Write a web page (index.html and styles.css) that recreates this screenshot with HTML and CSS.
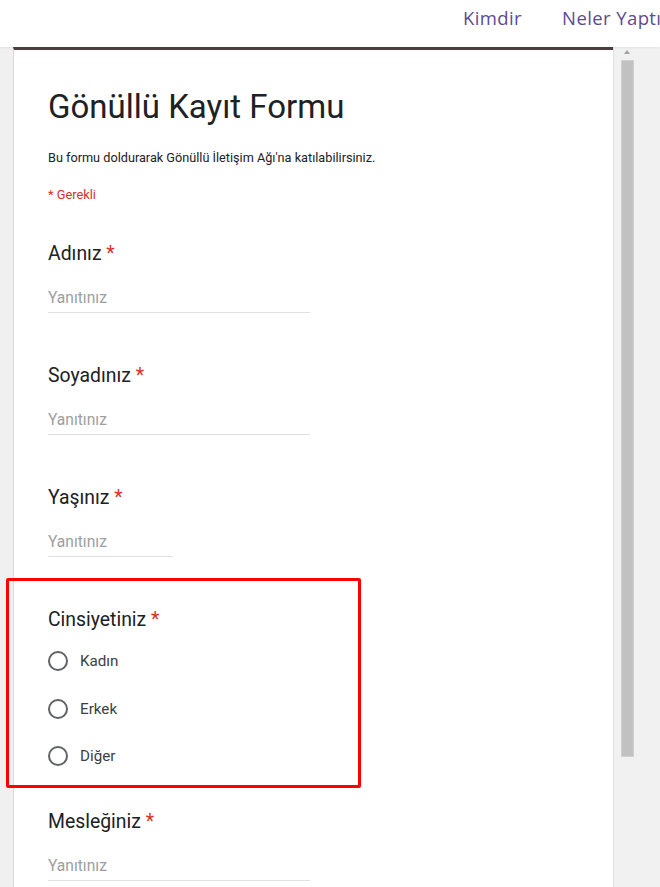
FILE: index.html
```
<!DOCTYPE html>
<html lang="tr">
<head>
<meta charset="utf-8">
<title>Gönüllü Kayıt Formu</title>
<link rel="stylesheet" href="styles.css">
</head>
<body>
<header class="topbar">
  <div class="brand"></div>
  <nav class="nav">
    <a class="nav-link" href="#">Kimdir</a>
    <a class="nav-link" href="#">Neler Yaptıklarımız</a>
  </nav>
</header>
<div class="frame">
  <div class="gutter"></div>
  <main class="card">
    <h1 class="form-title">Gönüllü Kayıt Formu</h1>
    <p class="form-desc">Bu formu doldurarak Gönüllü İletişim Ağı'na katılabilirsiniz.</p>
    <p class="required-note">* Gerekli</p>

    <section class="question">
      <div class="q-title">Adınız <span class="star">*</span></div>
      <div class="answer">Yanıtınız</div>
    </section>

    <section class="question">
      <div class="q-title">Soyadınız <span class="star">*</span></div>
      <div class="answer">Yanıtınız</div>
    </section>

    <section class="question">
      <div class="q-title">Yaşınız <span class="star">*</span></div>
      <div class="answer answer-short">Yanıtınız</div>
    </section>

    <section class="question">
      <div class="q-title">Cinsiyetiniz <span class="star">*</span></div>
      <div class="options">
        <div class="option"><span class="radio"></span><span class="opt-label">Kadın</span></div>
        <div class="option"><span class="radio"></span><span class="opt-label">Erkek</span></div>
        <div class="option"><span class="radio"></span><span class="opt-label">Diğer</span></div>
      </div>
    </section>

    <section class="question question-last">
      <div class="q-title">Mesleğiniz <span class="star">*</span></div>
      <div class="answer">Yanıtınız</div>
    </section>
  </main>
  <div class="scrollbar">
    <div class="scroll-arrow"></div>
    <div class="scroll-thumb"></div>
  </div>
</div>
<div class="highlight"></div>
</body>
</html>
```
FILE: styles.css
```
html, body {
  margin: 0;
  padding: 0;
  height: 887px;
  overflow: hidden;
  background: #ffffff;
}

body {
  font-family: Roboto, "Liberation Sans", Arial, sans-serif;
  color: #202124;
  position: relative;
}

.topbar {
  height: 47px;
  display: flex;
  align-items: center;
  overflow: hidden;
  background: #ffffff;
  box-shadow: 0 1px 2px rgba(0,0,0,0.06);
  position: relative;
  z-index: 2;
}

.brand {
  flex: 0 0 463px;
}

.nav {
  display: flex;
  gap: 40px;
  white-space: nowrap;
  flex: 0 0 auto;
}

.nav-link {
  font-family: "Open Sans", Lato, sans-serif;
  font-size: 18.5px;
  color: #5d4a93;
  text-decoration: none;
  letter-spacing: 0.4px;
  line-height: 24px;
  margin-top: -11px;
}

.frame {
  height: 840px;
  display: flex;
  background: #f1f1f1;
  overflow: hidden;
}

.gutter {
  flex: 0 0 13px;
  background: #f0f0f0;
}

.card {
  flex: 0 0 600px;
  background: #ffffff;
  border-left: 1px solid #dadada;
  border-top: 3px solid #503e40;
  padding: 37px 0 0 34px;
  box-sizing: border-box;
}

.form-title {
  margin: 0;
  font-size: 33px;
  font-weight: 400;
  line-height: 40px;
  color: #202124;
}

.form-desc {
  margin: 23px 0 0;
  font-size: 12.7px;
  line-height: 16px;
  color: #202124;
}

.required-note {
  margin: 21px 0 0;
  font-size: 12.8px;
  line-height: 16px;
  color: #d93025;
}

.question {
  margin-top: 39px;
}

.question + .question {
  margin-top: 51px;
}

.q-title {
  font-size: 19.4px;
  line-height: 24px;
  color: #202124;
}

.star {
  color: #d93025;
}

.answer {
  margin-top: 22px;
  width: 262px;
  height: 25px;
  box-sizing: border-box;
  border-bottom: 1px solid #e0e0e0;
  font-size: 15.6px;
  line-height: 20px;
  color: #9e9e9e;
}

.answer-short {
  width: 125px;
}

.options {
  margin-top: 17px;
  display: flex;
  flex-direction: column;
  gap: 23.5px;
}

.option {
  display: flex;
  align-items: center;
  height: 24px;
  gap: 12px;
}

.radio {
  width: 20px;
  height: 20px;
  box-sizing: border-box;
  border: 2px solid #5f6368;
  border-radius: 50%;
  flex: 0 0 20px;
}

.opt-label {
  font-size: 15.2px;
  color: #3c4043;
}

.question.question-last {
  margin-top: 42px;
}

.scrollbar {
  flex: 0 0 47px;
  border-left: 1px solid #e2e2e2;
  background: #f1f1f1;
  display: flex;
  flex-direction: column;
  align-items: flex-start;
  padding-left: 7px;
  box-sizing: border-box;
}

.scroll-arrow {
  margin: 3px 0 0 3px;
  width: 0;
  height: 0;
  border-left: 3.5px solid transparent;
  border-right: 3.5px solid transparent;
  border-bottom: 4px solid #a3a3a3;
}

.scroll-thumb {
  margin-top: 6px;
  width: 13px;
  height: 697px;
  box-sizing: border-box;
  background: #c1c1c1;
  border: 1px solid #d0d0d0;
}

.highlight {
  position: absolute;
  left: 6px;
  top: 578px;
  width: 355px;
  height: 210px;
  box-sizing: border-box;
  border: 3px solid #ff0000;
  border-radius: 2px;
  z-index: 3;
}
```
